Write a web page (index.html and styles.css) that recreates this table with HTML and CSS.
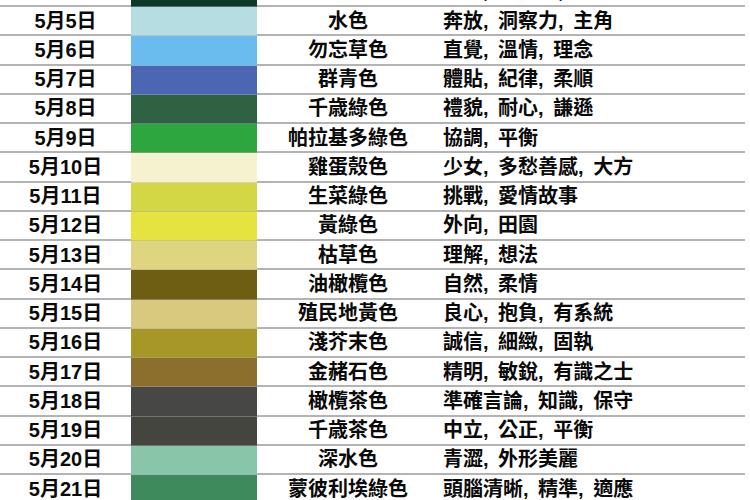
FILE: index.html
```html
<!DOCTYPE html>
<html lang="zh-Hant">
<head>
<meta charset="utf-8">
<link rel="stylesheet" href="styles.css">
</head>
<body>
<div class="table">
  <div class="row"><div class="cell date">5月4日</div><div class="swatch" style="background:#0c3a26"></div><div class="cell name">常盤色</div><div class="cell traits">冷靜, 適應力, 有效率</div></div>
  <div class="row"><div class="cell date">5月5日</div><div class="swatch" style="background:#b6dde2"></div><div class="cell name">水色</div><div class="cell traits">奔放, 洞察力, 主角</div></div>
  <div class="row"><div class="cell date">5月6日</div><div class="swatch" style="background:#6bbcee"></div><div class="cell name">勿忘草色</div><div class="cell traits">直覺, 溫情, 理念</div></div>
  <div class="row"><div class="cell date">5月7日</div><div class="swatch" style="background:#4b67b3"></div><div class="cell name">群青色</div><div class="cell traits">體貼, 紀律, 柔順</div></div>
  <div class="row"><div class="cell date">5月8日</div><div class="swatch" style="background:#2f6242"></div><div class="cell name">千歳綠色</div><div class="cell traits">禮貌, 耐心, 謙遜</div></div>
  <div class="row"><div class="cell date">5月9日</div><div class="swatch" style="background:#2ea63f"></div><div class="cell name">帕拉基多綠色</div><div class="cell traits">協調, 平衡</div></div>
  <div class="row"><div class="cell date">5月10日</div><div class="swatch" style="background:#f6f2cf"></div><div class="cell name">雞蛋殼色</div><div class="cell traits">少女, 多愁善感, 大方</div></div>
  <div class="row"><div class="cell date">5月11日</div><div class="swatch" style="background:#d3d745"></div><div class="cell name">生菜綠色</div><div class="cell traits">挑戰, 愛情故事</div></div>
  <div class="row"><div class="cell date">5月12日</div><div class="swatch" style="background:#e5e33f"></div><div class="cell name">黃綠色</div><div class="cell traits">外向, 田園</div></div>
  <div class="row"><div class="cell date">5月13日</div><div class="swatch" style="background:#dfd47f"></div><div class="cell name">枯草色</div><div class="cell traits">理解, 想法</div></div>
  <div class="row"><div class="cell date">5月14日</div><div class="swatch" style="background:#6e5e13"></div><div class="cell name">油橄欖色</div><div class="cell traits">自然, 柔情</div></div>
  <div class="row"><div class="cell date">5月15日</div><div class="swatch" style="background:#d8c97f"></div><div class="cell name">殖民地黃色</div><div class="cell traits">良心, 抱負, 有系統</div></div>
  <div class="row"><div class="cell date">5月16日</div><div class="swatch" style="background:#a79727"></div><div class="cell name">淺芥末色</div><div class="cell traits">誠信, 細緻, 固執</div></div>
  <div class="row"><div class="cell date">5月17日</div><div class="swatch" style="background:#8c6e2d"></div><div class="cell name">金赭石色</div><div class="cell traits">精明, 敏銳, 有識之士</div></div>
  <div class="row"><div class="cell date">5月18日</div><div class="swatch" style="background:#474745"></div><div class="cell name">橄欖茶色</div><div class="cell traits">準確言論, 知識, 保守</div></div>
  <div class="row"><div class="cell date">5月19日</div><div class="swatch" style="background:#45453f"></div><div class="cell name">千歳茶色</div><div class="cell traits">中立, 公正, 平衡</div></div>
  <div class="row"><div class="cell date">5月20日</div><div class="swatch" style="background:#89c6a9"></div><div class="cell name">深水色</div><div class="cell traits">青澀, 外形美麗</div></div>
  <div class="row"><div class="cell date">5月21日</div><div class="swatch" style="background:#3f8a5d"></div><div class="cell name">蒙彼利埃綠色</div><div class="cell traits">頭腦清晰, 精準, 適應</div></div>
</div>
</body>
</html>
```
FILE: styles.css
```css
html, body {
  margin: 0;
  padding: 0;
  background: #ffffff;
  overflow: hidden;
}

.table {
  width: 745px;
  margin-top: -22.25px;
  font-family: "Liberation Sans", "Noto Sans CJK TC", sans-serif;
  font-weight: 700;
  font-size: 20px;
  color: #0a0a0a;
}

.row {
  display: grid;
  grid-template-columns: 131px 126px 182px 1fr;
  height: 29.25px;
}

.cell {
  box-sizing: border-box;
  border-bottom: 2px solid #b3b3b3;
  display: flex;
  align-items: center;
  line-height: 1;
  white-space: nowrap;
}

.date, .name {
  justify-content: center;
}

.traits {
  padding-left: 4px;
  word-spacing: 4px;
}

.swatch {
  box-sizing: border-box;
  border-bottom: 1px solid rgba(170, 170, 170, 0.45);
}
```
